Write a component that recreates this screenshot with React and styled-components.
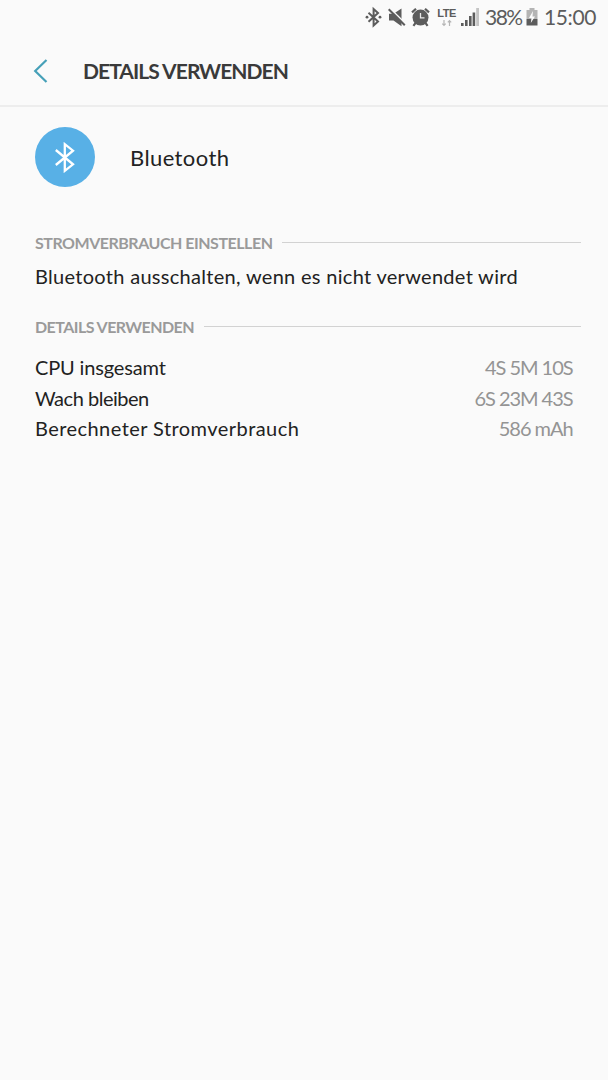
import React from "react";
import styled, { createGlobalStyle } from "styled-components";

const GlobalStyle = createGlobalStyle`
  * {
    box-sizing: border-box;
  }
  body {
    margin: 0;
    background: #fafafa;
    font-family: Lato, "Open Sans", sans-serif;
  }
`;

const Screen = styled.div`
  width: 608px;
  height: 1080px;
  overflow: hidden;
  background: #fafafa;
`;

const StatusBar = styled.div`
  height: 34px;
  display: flex;
  align-items: center;
  justify-content: flex-end;
  padding-right: 11px;
  color: #5c5c5c;
`;
const StatusIcon = styled.svg`
  flex: none;
  height: 34px;
  width: ${(p) => p.width}px;
  margin-right: ${(p) => p.$gap}px;
`;
const StatusText = styled.span`
  flex: none;
  width: ${(p) => p.$width}px;
  font-size: 21px;
  line-height: 34px;
  letter-spacing: ${(p) => p.$spacing}px;
  white-space: nowrap;
`;
const Network = styled.div`
  flex: none;
  width: 19px;
  height: 34px;
  margin-right: 4px;
  padding-top: 7px;
  display: flex;
  flex-direction: column;
  align-items: center;
`;
const NetworkLabel = styled.span`
  font-family: "Liberation Sans", sans-serif;
  font-size: 11px;
  font-weight: 700;
  line-height: 12px;
  letter-spacing: -0.5px;
`;

const Header = styled.header`
  height: 73px;
  padding: 2px 0 0 33px;
  display: flex;
  align-items: center;
  border-bottom: 2px solid #ededed;
`;
const Title = styled.h1`
  margin: 0 0 0 34px;
  font-size: 21px;
  font-weight: 700;
  letter-spacing: -0.95px;
  color: #3a3a3a;
`;

const Content = styled.main`
  padding: 20px 27px 0 35px;
`;
const AppRow = styled.div`
  display: flex;
  align-items: center;
`;
const AppIcon = styled.div`
  width: 60px;
  height: 60px;
  margin-right: 35px;
  border-radius: 50%;
  background: #58b0e6;
  display: flex;
  align-items: center;
  justify-content: center;
`;
const AppName = styled.span`
  font-size: 22px;
  letter-spacing: 0.4px;
  color: #222;
`;

const SectionTitle = styled.h2`
  height: 21px;
  margin: ${(p) => p.$top}px 0 0;
  display: flex;
  align-items: center;
  font-size: 16px;
  font-weight: 700;
  letter-spacing: ${(p) => p.$spacing}px;
  color: #9a9a9a;
  white-space: nowrap;

  &::after {
    content: "";
    flex: 1;
    height: 1px;
    margin-left: 10px;
    background: #d2d2d2;
  }
`;
const Option = styled.div`
  margin-top: 9px;
  font-size: 20px;
  line-height: 28px;
  letter-spacing: 0.3px;
  color: #222;
`;
const Usage = styled.div`
  margin-top: 15px;
  padding-right: 9px;
`;
const UsageRow = styled.div`
  height: 30.4px;
  display: flex;
  align-items: center;
  justify-content: space-between;
  font-size: 20px;
`;
const Label = styled.span`
  letter-spacing: ${(p) => p.$spacing}px;
  color: #222;
`;
const Value = styled.span`
  letter-spacing: -1.05px;
  margin-right: -0.5px;
  color: #949494;
`;

const usage = [
  { label: "CPU insgesamt", value: "4S 5M 10S", spacing: -0.15 },
  { label: "Wach bleiben", value: "6S 23M 43S", spacing: -0.48 },
  { label: "Berechneter Stromverbrauch", value: "586 mAh", spacing: 0.44 },
];

const StatusIcons = () => (
  <>
    <StatusIcon width="17" $gap={6} viewBox="0 0 17 34" fill="none">
      <path
        d="M3.5 12.8 13 21.5 8.6 25.5V9l4.4 4-9.5 8.7"
        stroke="currentColor"
        strokeWidth="2"
      />
      <circle cx="2" cy="17.2" r="1.4" fill="currentColor" />
      <circle cx="15" cy="17.2" r="1.4" fill="currentColor" />
    </StatusIcon>
    <StatusIcon width="18" $gap={5} viewBox="0 0 18 34">
      <path d="M1 13.8h4.5L13.5 8.6v17.6l-8-5.6H1z" fill="currentColor" />
      <path d="M2 8.2 18 24.2" stroke="#fafafa" strokeWidth="1.6" />
      <path d="M.7 9.2 16.8 25.3" stroke="currentColor" strokeWidth="2" />
    </StatusIcon>
    <StatusIcon width="19" $gap={7} viewBox="0 0 19 34">
      <circle cx="9.5" cy="17.6" r="8" fill="currentColor" />
      <path
        d="M1 12.4 5 8.8M18 12.4 14 8.8M4.6 22.8 2.4 25.8M14.4 22.8l2.2 3"
        stroke="currentColor"
        strokeWidth="2.2"
      />
      <path
        d="M9.5 13v4.8h4"
        fill="none"
        stroke="#e8e8e8"
        strokeWidth="1.3"
      />
    </StatusIcon>
    <Network>
      <NetworkLabel>LTE</NetworkLabel>
      <svg width="12" height="8" viewBox="0 0 12 8" fill="none">
        <path
          d="M3 1v5M1.3 4.6 3 6.4l1.7-1.8M8.5 7V2M6.8 3.4 8.5 1.6l1.7 1.8"
          stroke="#b5b5b5"
          strokeWidth="1.2"
        />
      </svg>
    </Network>
    <StatusIcon width="19" $gap={6} viewBox="0 0 19 34">
      <path
        d="M1 23h2.6v3H1zM5 20h2.6v6H5zM9 16h2.6v10H9zM12.6 12.5h2.6V26h-2.6z"
        fill="currentColor"
      />
      <path d="M16.2 8H19v18h-2.8z" fill="#c4c4c4" />
    </StatusIcon>
  </>
);

const Battery = () => (
  <StatusIcon width="12" $gap={6} viewBox="0 0 12 34">
    <path d="M3.5 8h5v2h3v9H.5v-9h3z" fill="#b4b4b4" />
    <path d="M.5 19h11v6.5H.5z" fill="currentColor" />
    <path d="M7 11 3 18h2.5L4.8 23 9 16.4H6.5z" fill="#fafafa" />
  </StatusIcon>
);

const App = () => {
  return (
    <Screen>
      <GlobalStyle />
      <StatusBar>
        <StatusIcons />
        <StatusText $width={41} $spacing={-1.5}>
          38%
        </StatusText>
        <Battery />
        <StatusText $width={53} $spacing={-0.4}>
          15:00
        </StatusText>
      </StatusBar>
      <Header>
        <svg width="16" height="24" viewBox="0 0 16 24" fill="none">
          <path d="M13.5 1 2.2 12l11.3 11" stroke="#46a0b8" strokeWidth="2.2" />
        </svg>
        <Title>DETAILS VERWENDEN</Title>
      </Header>
      <Content>
        <AppRow>
          <AppIcon>
            <svg width="20" height="31" viewBox="0 0 20 31" fill="none">
              <path
                d="M.8 8 18 22.3 9.8 28.8V2.2L18 8.7.8 23"
                stroke="#fff"
                strokeWidth="2.3"
              />
            </svg>
          </AppIcon>
          <AppName>Bluetooth</AppName>
        </AppRow>
        <SectionTitle $top={45} $spacing={-0.48}>
          STROMVERBRAUCH EINSTELLEN
        </SectionTitle>
        <Option>Bluetooth ausschalten, wenn es nicht verwendet wird</Option>
        <SectionTitle $top={26} $spacing={-0.56}>
          DETAILS VERWENDEN
        </SectionTitle>
        <Usage>
          {usage.map((row) => (
            <UsageRow key={row.label}>
              <Label $spacing={row.spacing}>{row.label}</Label>
              <Value>{row.value}</Value>
            </UsageRow>
          ))}
        </Usage>
      </Content>
    </Screen>
  );
};

export default App;
